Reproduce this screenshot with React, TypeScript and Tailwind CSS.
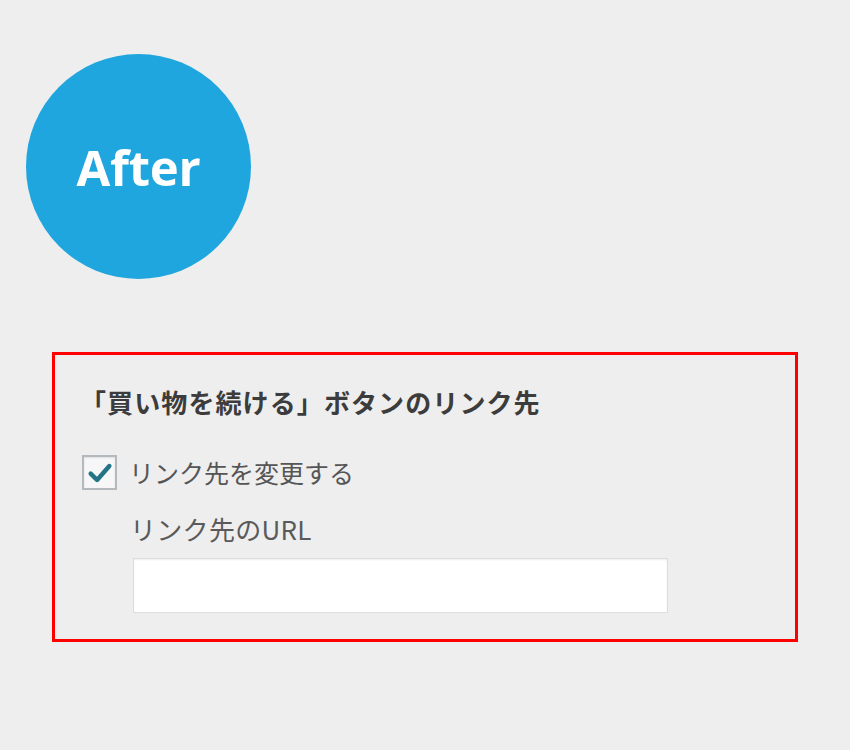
import React from 'react';

const jp = { fontFamily: '"Noto Sans CJK JP", "Noto Sans", sans-serif' };

export default function App() {
  return (
    <div className="w-[850px] h-[750px] bg-[#eeeeee] flex flex-col overflow-hidden">
      <div className="ml-[26px] mt-[54px] w-[225px] h-[225px] rounded-full bg-[#20a6df] flex items-center justify-center">
        <span
          className="text-white text-[49px] font-bold leading-none tracking-[-0.3px] pt-[2px]"
          style={{ fontFamily: '"Open Sans", sans-serif' }}
        >
          After
        </span>
      </div>

      <div className="ml-[52px] mt-[73px] w-[746px] border-[3px] border-[#ff0000] pl-[29px] pt-[29px] pb-[26px]" style={jp}>
        <h2 className="-ml-[4px] text-[26px] font-bold leading-[36px] text-[#3c3c3c] tracking-[1.1px]">
          「買い物を続ける」ボタンのリンク先
        </h2>

        <label className="mt-[35px] -ml-[2px] flex items-center h-[35px]">
          <span className="w-[35px] h-[35px] border-2 border-[#b4b9be] bg-[#f7f7f7] flex items-center justify-center shadow-[inset_0_1px_2px_rgba(0,0,0,0.1)]">
            <svg viewBox="0 0 24 24" className="w-[28px] h-[28px]">
              <path d="M4 12.5 L9.5 18 L20 6" fill="none" stroke="#237487" strokeWidth="3.8" strokeLinecap="round" strokeLinejoin="round" />
            </svg>
          </span>
          <span className="ml-[12px] text-[25px] leading-none text-[#555555]">リンク先を変更する</span>
        </label>

        <div className="ml-[46px] mt-[24px]">
          <div className="text-[26px] leading-[30px] text-[#5a5a5a] tracking-[0.3px]">リンク先のURL</div>
          <input
            type="text"
            className="ml-[3px] mt-[14px] block w-[535px] h-[55px] bg-white border border-[#dddddd] shadow-[inset_0_1px_2px_rgba(0,0,0,0.07)] outline-none"
          />
        </div>
      </div>
    </div>
  );
}
